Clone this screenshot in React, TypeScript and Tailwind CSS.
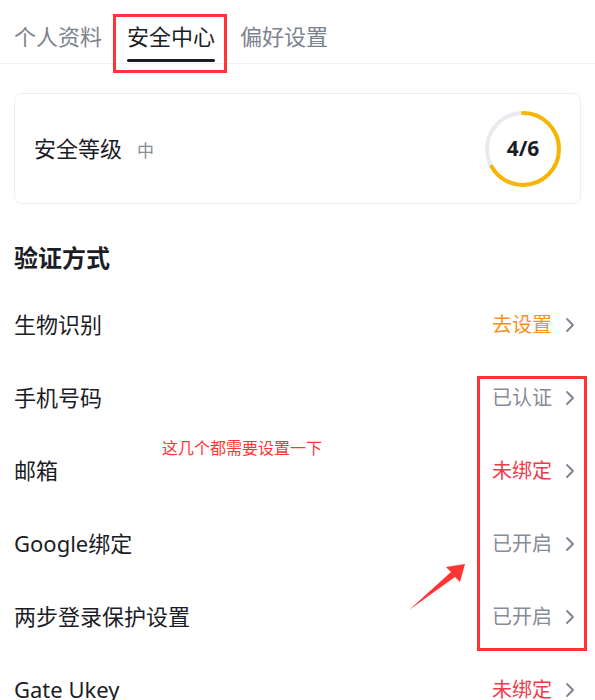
import React from "react";

const font = { fontFamily: '"Noto Sans", "Noto Sans CJK SC", sans-serif' };

type Row = { label: string; status: string; tone: "orange" | "gray" | "red" };

const rows: Row[] = [
  { label: "生物识别", status: "去设置", tone: "orange" },
  { label: "手机号码", status: "已认证", tone: "gray" },
  { label: "邮箱", status: "未绑定", tone: "red" },
  { label: "Google绑定", status: "已开启", tone: "gray" },
  { label: "两步登录保护设置", status: "已开启", tone: "gray" },
  { label: "Gate Ukey", status: "未绑定", tone: "red" },
];

const toneClass = {
  orange: "text-[#f5921e]",
  gray: "text-[#868b95]",
  red: "text-[#f23a4c]",
};

function Chevron() {
  return (
    <svg width="10" height="16" viewBox="0 0 10 16" fill="none">
      <path d="M2 2l6 6-6 6" stroke="#7d838e" strokeWidth="1.8" strokeLinecap="round" strokeLinejoin="round" />
    </svg>
  );
}

function Ring() {
  const r = 36;
  const c = 2 * Math.PI * r;
  return (
    <div className="relative h-[78px] w-[78px]">
      <svg width="78" height="78" viewBox="0 0 78 78" className="-rotate-90">
        <circle cx="39" cy="39" r={r} stroke="#e9eaef" strokeWidth="4" fill="none" />
        <circle
          cx="39"
          cy="39"
          r={r}
          stroke="#f7b500"
          strokeWidth="4"
          fill="none"
          strokeLinecap="round"
          strokeDasharray={`${(c * 4) / 6} ${c}`}
        />
      </svg>
      <div className="absolute inset-0 flex items-center justify-center text-[21px] font-bold text-[#1b1d26]">4/6</div>
    </div>
  );
}

export default function App() {
  return (
    <div className="relative h-[700px] w-[595px] overflow-hidden bg-white" style={font}>
      {/* tabs */}
      <div className="flex h-[64px] items-start gap-[25px] border-b border-[#f0f1f4] px-[14px] pt-[19px] text-[22px] leading-[34px]">
        <span className="text-[#7d838e]">个人资料</span>
        <div className="flex flex-col items-stretch">
          <span className="text-[#1b1d26]">安全中心</span>
          <span className="mt-[6px] h-[3px] rounded-full bg-[#1b1d26]" />
        </div>
        <span className="text-[#7d838e]">偏好设置</span>
      </div>

      <div className="px-[14px]">
        {/* level card */}
        <div className="mt-[29px] flex h-[111px] items-center justify-between rounded-[8px] border border-[#eceef3] pl-[19px] pr-[18px]">
          <div className="flex items-baseline gap-[15px]">
            <span className="text-[22px] text-[#1b1d26]">安全等级</span>
            <span className="text-[17px] text-[#868b95]">中</span>
          </div>
          <Ring />
        </div>

        <div className="mt-[38px] flex h-[32px] items-center text-[24px] font-bold text-[#1b1d26]">验证方式</div>
        <div className="mt-[14px]">
          {rows.map((row) => (
            <div key={row.label} className="flex h-[73px] items-center justify-between">
              <span className="text-[22px] text-[#1b1d26]">{row.label}</span>
              <div className="flex items-center gap-[13px] pr-[6px]">
                <span className={`text-[20px] ${toneClass[row.tone]}`}>{row.status}</span>
                <Chevron />
              </div>
            </div>
          ))}
        </div>
      </div>

      {/* annotations */}
      <div className="pointer-events-none absolute left-[113px] top-[14px] h-[59px] w-[114px] border-[3px] border-[#ff3434]" />
      <div className="pointer-events-none absolute left-[477px] top-[376px] h-[275px] w-[110px] border-[3px] border-[#ff3434]" />
      <div className="absolute left-[162px] top-[436px] text-[16px] leading-[22px] text-[#ff3434]" style={{ fontFamily: '"Noto Sans CJK SC", sans-serif' }}>
        这几个都需要设置一下
      </div>
      <svg className="absolute left-0 top-0" width="595" height="700" viewBox="0 0 595 700">
        <path d="M409 610 L451 572 L446 567 L465 564 L460 582 L455 577 Z" fill="#ff3434" />
      </svg>
    </div>
  );
}
